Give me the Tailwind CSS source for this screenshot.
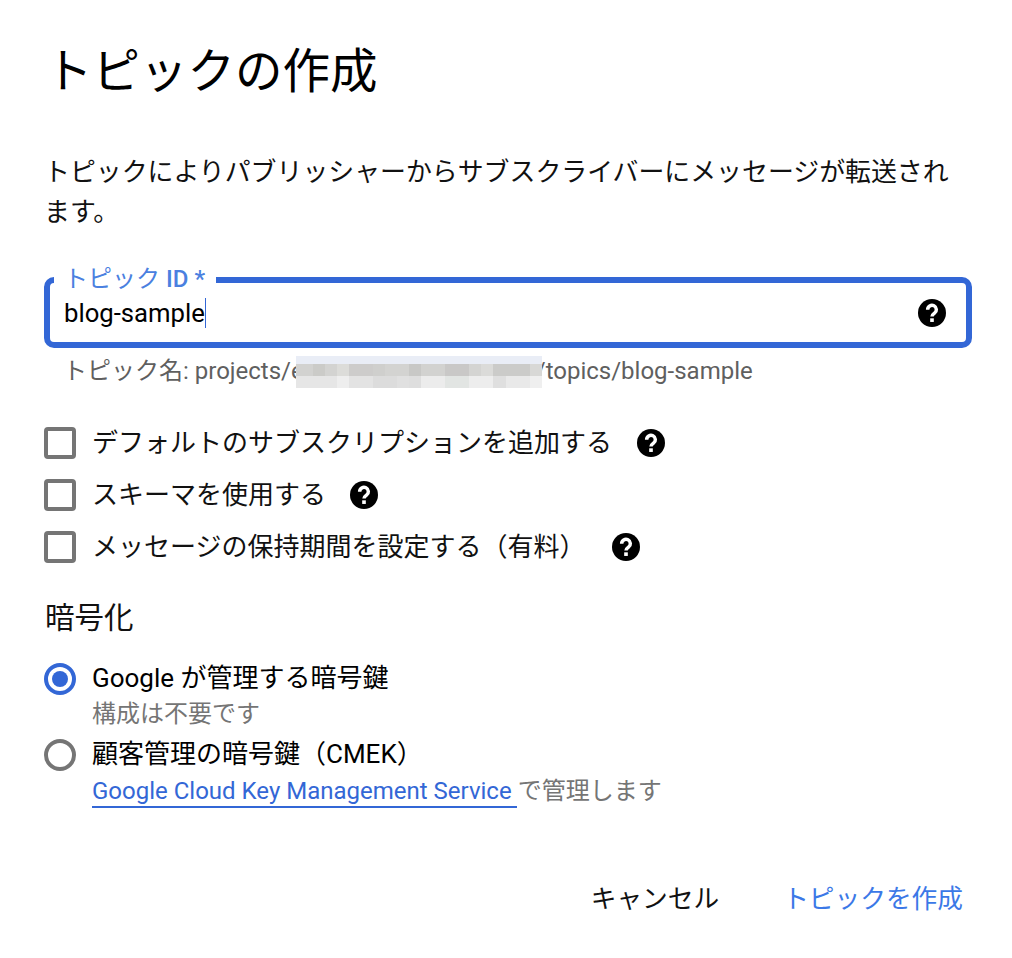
<!DOCTYPE html>
<html lang="ja">
<head>
  <meta charset="UTF-8">
  <title>トピックの作成</title>
  <script src="https://cdn.jsdelivr.net/npm/@tailwindcss/browser@4"></script>
</head>
<body class="bg-white font-['Roboto','Noto_Sans_CJK_JP',sans-serif] text-black">
  <div class="w-[1012px] h-[958px] overflow-hidden pl-[44px] pr-[40px] pt-[40px] flex flex-col">

    <h1 class="ml-px text-[47.5px] leading-[64px] font-normal">トピックの作成</h1>

    <p class="mt-[49px] w-[915px] text-[25.9px] leading-[39.5px] text-[#111]">トピックによりパブリッシャーからサブスクライバーにメッセージが転送されます。</p>

    <!-- トピック ID -->
    <div class="relative mt-[45px] h-[71px] w-[928px] border-[6px] border-[#3367d6] rounded-[10px] flex items-center pl-[14px] pr-[20px]">
      <span class="absolute -top-[17px] left-[4px] bg-white pl-[10px] pr-[11px] text-[24px] leading-[26px] text-[#4a80e0] font-medium"><span class="font-normal">トピック</span> ID *</span>
      <span class="text-[25.7px] leading-[34px]">blog-sample</span>
      <span class="w-px h-[30px] bg-[#3367d6]"></span>
      <svg class="ml-auto w-[28px] h-[28px]" viewBox="2 2 20 20"><circle cx="12" cy="12" r="10" fill="#000"/><path d="M8.9 9.6a3.1 3.1 0 1 1 4.9 2.5c-1.1.8-1.8 1.2-1.8 2.4" fill="none" stroke="#fff" stroke-width="2.5"/><rect x="10.7" y="15.8" width="2.6" height="2.6" fill="#fff"/></svg>
    </div>
    <div class="relative mt-[5px] pl-[19px] text-[24px] leading-[36px] text-[#5f5f5f]">
      トピック名: projects/e<span class="inline-block w-[232px]"></span>/topics/blog-sample
      <!-- ぼかし -->
      <div class="absolute left-[252px] top-[3px] w-[246px] flex flex-col">
        <div class="h-[8px] bg-[#e9edf6]"></div>
        <div class="h-[12px] flex">
          <div class="w-[17px] bg-[#d2d2d0]"></div>
          <div class="w-[12px] bg-[#cbcbc8]"></div>
          <div class="w-[12px] bg-[#d3d3d1]"></div>
          <div class="w-[12px] bg-[#dcdcd9]"></div>
          <div class="w-[24px] bg-[#cdcccb]"></div>
          <div class="w-[12px] bg-[#cfcfcd]"></div>
          <div class="w-[24px] bg-[#d3d3d1]"></div>
          <div class="w-[12px] bg-[#c8c8c6]"></div>
          <div class="w-[24px] bg-[#d2d2d0]"></div>
          <div class="w-[24px] bg-[#c9c8c7]"></div>
          <div class="w-[12px] bg-[#d4d4d2]"></div>
          <div class="w-[12px] bg-[#dbdbd9]"></div>
          <div class="w-[37px] bg-[#cbcbc9]"></div>
          <div class="w-[12px] bg-[#d8d8d6]"></div>
        </div>
        <div class="h-[12px] flex">
          <div class="w-[41px] bg-[#e6e6e6]"></div>
          <div class="w-[12px] bg-[#eeeeee]"></div>
          <div class="w-[24px] bg-[#e3e3e3]"></div>
          <div class="w-[24px] bg-[#dcdcdc]"></div>
          <div class="w-[12px] bg-[#e0e0e0]"></div>
          <div class="w-[12px] bg-[#dedede]"></div>
          <div class="w-[24px] bg-[#ececec]"></div>
          <div class="w-[24px] bg-[#e2e5e3]"></div>
          <div class="w-[24px] bg-[#ededed]"></div>
          <div class="w-[13px] bg-[#dfdfdf]"></div>
          <div class="w-[24px] bg-[#e9e9e9]"></div>
          <div class="w-[12px] bg-[#efefef]"></div>
        </div>
      </div>
    </div>

    <!-- オプション -->
    <div class="mt-[38px] flex flex-col gap-[20px] text-[26px] leading-[32px] text-[#111]">
      <label class="flex items-center h-[32px]">
        <span class="w-[32px] h-[32px] border-[4px] border-[#757575] rounded-[4px]"></span>
        <span class="ml-[16px]">デフォルトのサブスクリプションを追加する</span>
        <svg class="ml-[25px] w-[28px] h-[28px]" viewBox="2 2 20 20"><circle cx="12" cy="12" r="10" fill="#000"/><path d="M8.9 9.6a3.1 3.1 0 1 1 4.9 2.5c-1.1.8-1.8 1.2-1.8 2.4" fill="none" stroke="#fff" stroke-width="2.5"/><rect x="10.7" y="15.8" width="2.6" height="2.6" fill="#fff"/></svg>
      </label>
      <label class="flex items-center h-[32px]">
        <span class="w-[32px] h-[32px] border-[4px] border-[#757575] rounded-[4px]"></span>
        <span class="ml-[16px]">スキーマを使用する</span>
        <svg class="ml-[24px] w-[28px] h-[28px]" viewBox="2 2 20 20"><circle cx="12" cy="12" r="10" fill="#000"/><path d="M8.9 9.6a3.1 3.1 0 1 1 4.9 2.5c-1.1.8-1.8 1.2-1.8 2.4" fill="none" stroke="#fff" stroke-width="2.5"/><rect x="10.7" y="15.8" width="2.6" height="2.6" fill="#fff"/></svg>
      </label>
      <label class="flex items-center h-[32px]">
        <span class="w-[32px] h-[32px] border-[4px] border-[#757575] rounded-[4px]"></span>
        <span class="ml-[16px]">メッセージの保持期間を設定する（有料）</span>
        <svg class="ml-[27px] w-[28px] h-[28px]" viewBox="2 2 20 20"><circle cx="12" cy="12" r="10" fill="#000"/><path d="M8.9 9.6a3.1 3.1 0 1 1 4.9 2.5c-1.1.8-1.8 1.2-1.8 2.4" fill="none" stroke="#fff" stroke-width="2.5"/><rect x="10.7" y="15.8" width="2.6" height="2.6" fill="#fff"/></svg>
      </label>
    </div>

    <!-- 暗号化 -->
    <h2 class="ml-px mt-[35px] text-[29.5px] leading-[40px] font-normal text-[#111]">暗号化</h2>

    <div class="mt-[22px] flex items-start">
      <span class="w-[32px] h-[32px] mt-[3px] border-[4px] border-[#3367d6] rounded-full flex items-center justify-center"><span class="w-[16px] h-[16px] rounded-full bg-[#3367d6]"></span></span>
      <div class="ml-[16px]">
        <div class="text-[26px] leading-[36px]">Google が管理する暗号鍵</div>
        <div class="text-[24px] leading-[32px] text-[#757575] mt-[2px]">構成は不要です</div>
      </div>
    </div>
    <div class="mt-[6px] flex items-start">
      <span class="w-[32px] h-[32px] mt-[3px] border-[4px] border-[#757575] rounded-full"></span>
      <div class="ml-[16px]">
        <div class="text-[26px] leading-[36px]">顧客管理の暗号鍵（CMEK）</div>
        <div class="text-[24px] leading-[32px] text-[#757575] mt-[3px]"><a class="text-[#3367d6] border-b-2 border-[#3367d6] inline-block leading-[29px] pr-[5px]">Google Cloud Key Management Service</a><span class="ml-px">で管理します</span></div>
      </div>
    </div>

    <!-- ボタン -->
    <div class="mt-[73px] pr-[9px] flex justify-end gap-[64px] text-[25.7px] leading-[36px]">
      <button class="text-[#111]">キャンセル</button>
      <button class="text-[#3b78e7]">トピックを作成</button>
    </div>
  </div>
</body>
</html>
